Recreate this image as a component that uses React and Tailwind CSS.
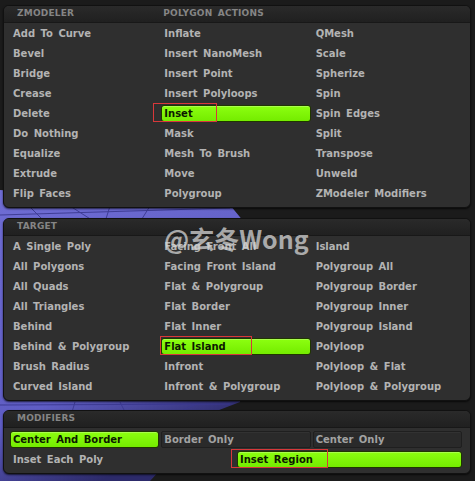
import React from 'react';

const font = { fontFamily: '"DejaVu Sans", Verdana, sans-serif' };

const zmodelerRows = [
  ['Add To Curve', 'Inflate', 'QMesh'],
  ['Bevel', 'Insert NanoMesh', 'Scale'],
  ['Bridge', 'Insert Point', 'Spherize'],
  ['Crease', 'Insert Polyloops', 'Spin'],
  ['Delete', 'Inset', 'Spin Edges'],
  ['Do Nothing', 'Mask', 'Split'],
  ['Equalize', 'Mesh To Brush', 'Transpose'],
  ['Extrude', 'Move', 'Unweld'],
  ['Flip Faces', 'Polygroup', 'ZModeler Modifiers'],
];

const targetRows = [
  ['A Single Poly', 'Facing Front All', 'Island'],
  ['All Polygons', 'Facing Front Island', 'Polygroup All'],
  ['All Quads', 'Flat & Polygroup', 'Polygroup Border'],
  ['All Triangles', 'Flat Border', 'Polygroup Inner'],
  ['Behind', 'Flat Inner', 'Polygroup Island'],
  ['Behind & Polygroup', 'Flat Island', 'Polyloop'],
  ['Brush Radius', 'Infront', 'Polyloop & Flat'],
  ['Curved Island', 'Infront & Polygroup', 'Polyloop & Polygroup'],
];

// red annotation boxes drawn over the picked items
const marks = {
  Inset: 'left-[-8px] w-[64px]',
  'Flat Island': 'left-[-1px] w-[92px]',
  'Inset Region': 'left-[-6px] w-[97px]',
};

function Cell({ label, active, boxed, mark }) {
  return (
    <div className="relative h-[20px] flex items-center">
      {active ? (
        <div className="h-[17px] w-full mr-[2px] flex items-center pl-[2px] rounded-[3px] border border-[#203600] bg-gradient-to-b from-[#8cff10] to-[#74ec00] text-[#0c1a00] shadow-[inset_0_1px_0_rgba(255,255,255,0.25)]">
          {label}
        </div>
      ) : boxed ? (
        <div className="h-[17px] w-full mr-[2px] flex items-center pl-[2px] rounded-[2px] border border-[#1f1f1f] bg-[#2a2a2a] text-[#a2a2a2] shadow-[inset_0_1px_0_rgba(255,255,255,0.04)]">
          {label}
        </div>
      ) : (
        <span className="pl-[3px] text-[#b3b3b3]">{label}</span>
      )}
      {mark && (
        <div className={`absolute top-[0px] h-[19px] border border-[#d8383a] pointer-events-none ${marks[label]}`} />
      )}
    </div>
  );
}

function Panel({ titles, className = '', bodyClass = '', children }) {
  return (
    <div className={`rounded-[6px] border border-[#111] bg-[#2f2f2f] shadow-[0_1px_2px_rgba(0,0,0,0.7)] overflow-hidden ${className}`}>
      <div className="h-[17px] grid grid-cols-3 px-[6px] items-center bg-gradient-to-b from-[#2a2a2a] to-[#202020] border-b border-[#181818] text-[9px] font-bold text-[#858585] tracking-[0.2px]">
        {titles.map((t, i) => (
          <span key={i} className={i === 0 ? 'pl-[7px]' : 'pl-[2px]'}>{t}</span>
        ))}
      </div>
      <div className={`px-[6px] pb-[4px] ${bodyClass}`}>{children}</div>
    </div>
  );
}

function Background() {
  return (
    <svg className="absolute inset-0" width="475" height="481" viewBox="0 0 475 481">
      <rect width="475" height="481" fill="#1b1b1b" />
      <defs>
        <linearGradient id="mesh" x1="0" y1="0" x2="0.4" y2="1">
          <stop offset="0" stopColor="#6f6dd4" />
          <stop offset="0.7" stopColor="#5f5dc4" />
          <stop offset="1" stopColor="#2c2a6a" />
        </linearGradient>
      </defs>
      <polygon points="0,190 230,205 244,222 250,300 240,402 214,412 150,481 0,481" fill="url(#mesh)" />
      <g stroke="#3b3990" strokeWidth="1" fill="none" opacity="0.9">
        <line x1="28" y1="205" x2="45" y2="222" />
        <line x1="70" y1="206" x2="95" y2="222" />
        <line x1="105" y1="222" x2="110" y2="206" />
        <line x1="140" y1="222" x2="150" y2="206" />
        <line x1="0" y1="215" x2="230" y2="208" />
        <line x1="75" y1="402" x2="72" y2="412" />
        <line x1="120" y1="402" x2="125" y2="412" />
        <line x1="180" y1="412" x2="200" y2="402" />
        <line x1="0" y1="405" x2="230" y2="404" />
      </g>
    </svg>
  );
}

export default function App() {
  return (
    <div className="relative w-[475px] h-[481px] overflow-hidden bg-[#1b1b1b] text-[10px] font-bold [word-spacing:2px]" style={font}>
      <Background />
      <div className="relative flex flex-col pt-[5px] pl-[3px] pr-[4px]">
        <Panel titles={['ZMODELER', 'POLYGON ACTIONS', '']}>
          <div className="grid grid-cols-3">
            {zmodelerRows.flat().map((label) => (
              <Cell key={label} label={label} active={label === 'Inset'} mark={label === 'Inset'} />
            ))}
          </div>
        </Panel>

        <Panel titles={['TARGET', '', '']} className="mt-[10px]">
          <div className="grid grid-cols-3">
            {targetRows.flat().map((label) => (
              <Cell key={label} label={label} active={label === 'Flat Island'} mark={label === 'Flat Island'} />
            ))}
          </div>
        </Panel>

        <Panel titles={['MODIFIERS', '', '']} className="mt-[9px]" bodyClass="pt-[1px]">
          <div className="grid grid-cols-3">
            <Cell label="Center And Border" active />
            <Cell label="Border Only" boxed />
            <Cell label="Center Only" boxed />
          </div>
          <div className="grid grid-cols-2">
            <Cell label="Inset Each Poly" />
            <Cell label="Inset Region" active mark />
          </div>
        </Panel>
      </div>

      {/* watermark */}
      <div
        className="absolute left-[164px] top-[220px] text-[25px] font-bold text-[#d4d4d4]/75 [word-spacing:0px]"
        style={{ fontFamily: '"Noto Sans CJK SC", "Noto Sans", sans-serif' }}
      >
        @玄冬Wong
      </div>
    </div>
  );
}
